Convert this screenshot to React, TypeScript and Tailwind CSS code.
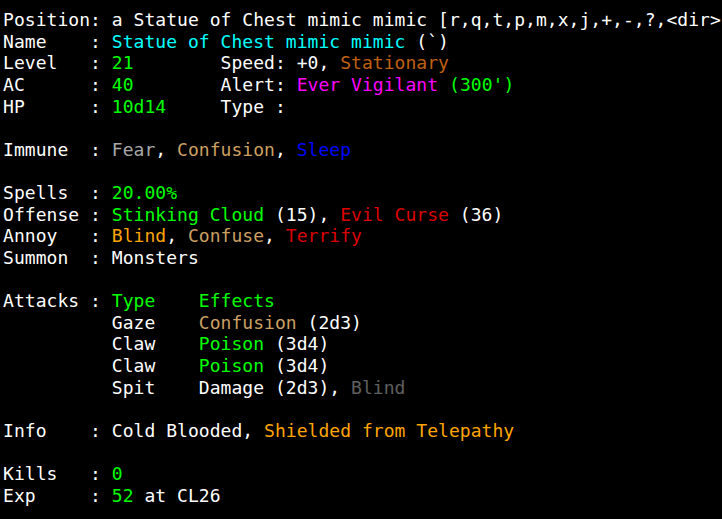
import React from "react";

type Seg = [string, string];

const W = "text-white";
const G = "text-[#00ff00]";
const C = "text-[#00ffff]";
const U = "text-[#c06010]";
const V = "text-[#ff00ff]";
const LU = "text-[#cda062]";
const SL = "text-[#a8a8a8]";
const B = "text-[#0000ff]";
const R = "text-[#dd0000]";
const O = "text-[#ffa500]";
const D = "text-[#606060]";

const lines: Seg[][] = [
  [[W, "Position: a Statue of Chest mimic mimic [r,q,t,p,m,x,j,+,-,?,<dir>"]],
  [[W, "Name    : "], [C, "Statue of Chest mimic mimic"], [W, " (`)"]],
  [[W, "Level   : "], [G, "21"], [W, "        Speed: +0, "], [U, "Stationary"]],
  [[W, "AC      : "], [G, "40"], [W, "        Alert: "], [V, "Ever Vigilant"], [W, " "], [G, "(300')"]],
  [[W, "HP      : "], [G, "10d14"], [W, "     Type :"]],
  [],
  [[W, "Immune  : "], [SL, "Fear"], [W, ", "], [LU, "Confusion"], [W, ", "], [B, "Sleep"]],
  [],
  [[W, "Spells  : "], [G, "20.00%"]],
  [[W, "Offense : "], [G, "Stinking Cloud"], [W, " (15), "], [R, "Evil Curse"], [W, " (36)"]],
  [[W, "Annoy   : "], [O, "Blind"], [W, ", "], [LU, "Confuse"], [W, ", "], [R, "Terrify"]],
  [[W, "Summon  : Monsters"]],
  [],
  [[W, "Attacks : "], [G, "Type    Effects"]],
  [[W, "          Gaze    "], [LU, "Confusion"], [W, " (2d3)"]],
  [[W, "          Claw    "], [G, "Poison"], [W, " (3d4)"]],
  [[W, "          Claw    "], [G, "Poison"], [W, " (3d4)"]],
  [[W, "          Spit    Damage (2d3), "], [D, "Blind"]],
  [],
  [[W, "Info    : Cold Blooded, "], [O, "Shielded from Telepathy"]],
  [],
  [[W, "Kills   : "], [G, "0"]],
  [[W, "Exp     : "], [G, "52"], [W, " at CL26"]],
];

export default function App() {
  return (
    <div className="w-[722px] h-[519px] overflow-hidden bg-black pl-[3px] pt-[9px] font-['DejaVu_Sans_Mono',monospace] text-[18px] leading-[21.636px] tracking-[0.04px] whitespace-pre">
      {lines.map((segs, i) => (
        <div key={i} className="h-[21.636px]">
          {segs.map(([cls, t], j) => (
            <span key={j} className={cls}>
              {t}
            </span>
          ))}
        </div>
      ))}
    </div>
  );
}
